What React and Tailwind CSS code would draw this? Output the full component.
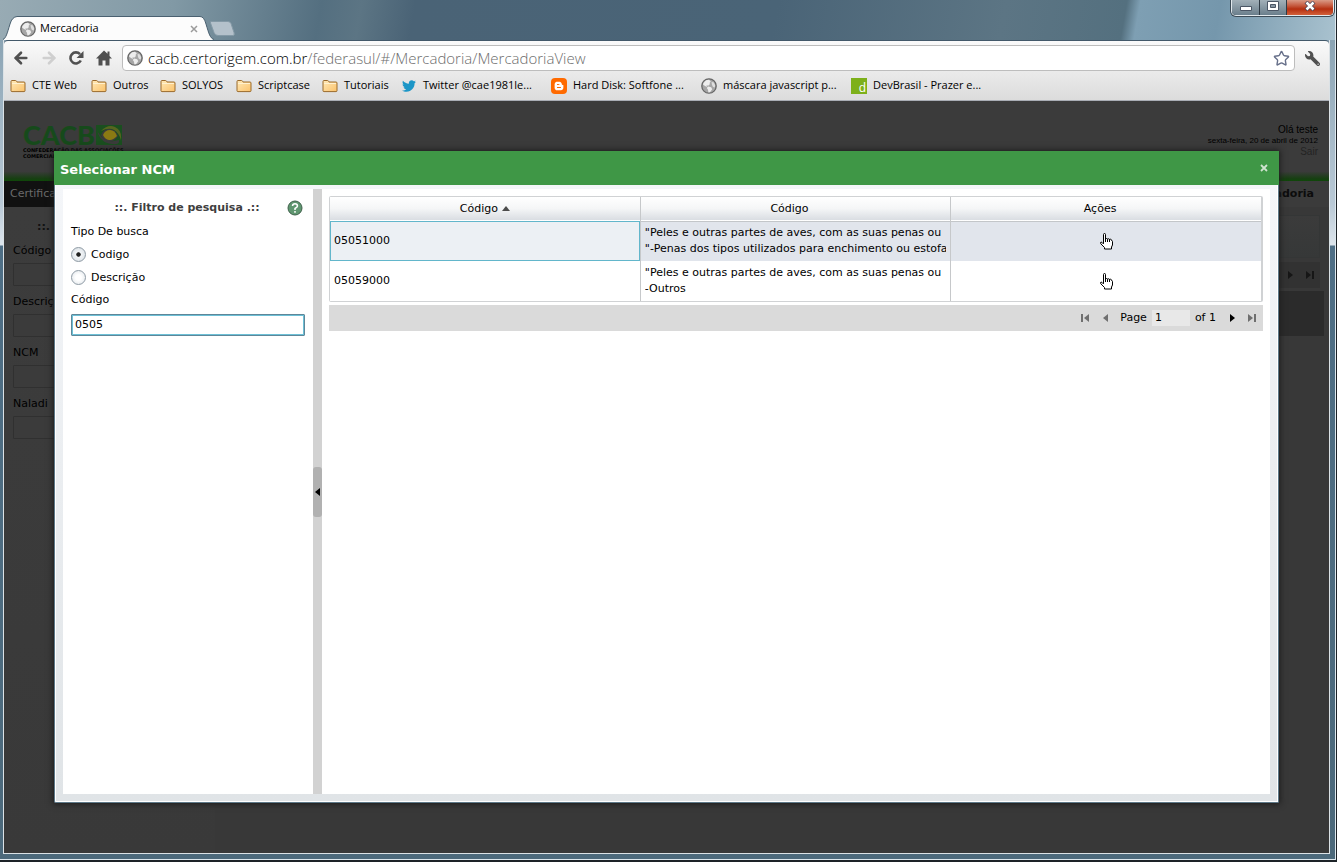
import { useState } from "react"
import { ArrowLeft, ArrowRight, Star } from "lucide-react"
import { FaTwitter, FaWrench, FaBloggerB } from "react-icons/fa"

const bookmarks = [
  { label: "CTE Web", icon: "folder", width: "w-[81px]" },
  { label: "Outros", icon: "folder", width: "w-[69px]" },
  { label: "SOLYOS", icon: "folder", width: "w-[76px]" },
  { label: "Scriptcase", icon: "folder", width: "w-[86px]" },
  { label: "Tutoriais", icon: "folder", width: "w-[79px]" },
  { label: "Twitter @cae1981le...", icon: "twitter", width: "w-[150px]" },
  { label: "Hard Disk: Softfone ...", icon: "blogger", width: "w-[150px]" },
  { label: "máscara javascript p...", icon: "globe", width: "w-[150px]" },
  { label: "DevBrasil - Prazer e...", icon: "dev", width: "w-[150px]" },
]

const rows = [
  {
    code: "05051000",
    lines: [
      '"Peles e outras partes de aves, com as suas penas ou',
      '"-Penas dos tipos utilizados para enchimento ou estofamento',
    ],
  },
  {
    code: "05059000",
    lines: ['"Peles e outras partes de aves, com as suas penas ou', "-Outros"],
  },
]

function Globe() {
  return (
    <svg viewBox="0 0 16 16" className="size-4 shrink-0">
      <circle cx="8" cy="8" r="7.2" fill="#a6a6a6" stroke="#666" strokeWidth="1.3" />
      <path d="M2.500 5 5 2.200 8 1.800l1.800 1.700L8.500 5 9 6 7.200 7.800 5.500 7.200 6 9 4 8 2 6.500ZM7 8.500l3.200.8 1 1.900-2.200 3-1.600.4-.4-2.800L5.800 10Z" fill="#ededed" />
      <path d="m10.500 4 2 .2 1.700 2.800-.4 2.600-1.800-.7-1-2Z" fill="#dedede" />
    </svg>
  )
}

function Folder() {
  return (
    <svg viewBox="0 0 16 16" className="size-4 shrink-0">
      <defs>
        <linearGradient id="folder" x1="0" y1="0" x2="1" y2="1">
          <stop offset="0" stopColor="#ffe9b8" />
          <stop offset="1" stopColor="#fbc26a" />
        </linearGradient>
      </defs>
      <path d="M1 12.800V3.500q0-1 1-1h3.500q.8 0 1.200 1l.3.500h7q1 0 1 1v7.800q0 .8-1 .8H2q-1 0-1-.8Z" fill="url(#folder)" stroke="#9a6a2c" />
      <path d="M2 5.500h12" stroke="#fff1cf" />
    </svg>
  )
}

function BookmarkIcon({ name }) {
  if (name === "twitter") {
    return (
      <span className="flex size-4 shrink-0 items-center justify-center">
        <FaTwitter className="size-[14px] text-[#1c96c7]" />
      </span>
    )
  }
  if (name === "globe") return <Globe />
  if (name === "blogger") {
    return (
      <span className="flex size-4 shrink-0 items-center justify-center rounded-sm bg-[#ff6a00]">
        <FaBloggerB className="size-[10px] text-white" />
      </span>
    )
  }
  if (name === "dev") {
    return (
      <span className="flex size-4 shrink-0 items-end justify-end bg-[#7db01a] pr-px text-xs leading-3 text-white">d</span>
    )
  }
  return <Folder />
}

function HandIcon() {
  return (
    <svg viewBox="0 0 13 17" className="h-[17px] w-[13px]">
      <path
        d="M3.500 10.500V1.500q0-1 1-1t1 1V6.500q0-1 1-1t1 1q0-.8 1-.8t1 1.200q0-.7 1-.7t1 1.300q1 0 1 1V12l-1 2v2h-7v-1.500L.8 10.800Q0 9.500 1 9q1 0 2.500 2Z"
        fill="white"
        stroke="black"
      />
      <path d="M5.500 6v3M7.500 6.500V9M9.500 7v2" stroke="black" fill="none" />
    </svg>
  )
}

function PagerArrow({ direction, end, className = "" }) {
  return (
    <svg viewBox="0 0 10 10" className={`size-[10px] ${direction === "left" ? "-scale-x-100" : ""} ${className}`}>
      <path d={end ? "M1 1l5 4-5 4ZM7 1h2v8H7Z" : "M3 1l5 4-5 4Z"} fill="currentColor" />
    </svg>
  )
}

function TitleBar() {
  return (
    <header className="flex h-10 shrink-0 items-end bg-[linear-gradient(100deg,#98abb4_0%,#8199a5_13%,#546f80_24%,#5c7584_27%,#4a6376_31%,#4a6477_58%,#5c7584_75%,#54707f_84%,#7e9fb3_85%,#7597ac_91%,#a9c2cf_100%)] pl-[3px]">
      <div className="flex h-6">
        <svg viewBox="0 0 14 24" className="h-6 w-[14px]">
          <path d="M0 24C3 22 4 18 7 8Q9 1 14 .5V24Z" fill="#fcfcfc" />
          <path d="M0 23.500C3 22 4 18 7 8Q9 1 14 .5" fill="none" stroke="#4a6070" />
        </svg>
        <div className="flex w-[183px] items-center gap-1 border-t border-[#4a6070] bg-[#fcfcfc] pl-[3px]">
          <Globe />
          <span className="flex-1">Mercadoria</span>
          <button aria-label="Fechar aba" className="pr-[2px]">
            <svg viewBox="0 0 8 8" className="size-2">
              <path d="m1 1 6 6M7 1 1 7" stroke="#9b9b9b" strokeWidth="1.500" />
            </svg>
          </button>
        </div>
        <svg viewBox="0 0 14 24" className="h-6 w-[14px]">
          <path d="M0 .5Q4 .5 6 8C9 18 10 22 14 24H0Z" fill="#fcfcfc" />
          <path d="M0 .5Q4 .5 6 8C9 18 10 22 14 23.500" fill="none" stroke="#4a6070" />
        </svg>
      </div>
      <button aria-label="Nova aba" className="-ml-1 mb-1">
        <svg viewBox="0 0 25 15" className="h-[15px] w-[25px]">
          <path d="M1 .5h17q2 0 3 2l3 9q1 3-1 3H8q-3 0-4-3L.5 2Q0 .5 1 .5Z" fill="#b4c1cb" stroke="#8499a6" />
        </svg>
      </button>
      <div className="mr-px ml-auto flex h-4 self-start rounded-b-[5px] border border-t-0 border-[#e2e9ed] bg-[#2f3b45] shadow-[0_0_0_1px_#3c4b56]">
        <button aria-label="Minimizar" className="flex w-[27px] items-center justify-center rounded-bl-sm bg-linear-to-b from-[#a2b0b8] to-[#6b7f8c]">
          <svg viewBox="0 0 12 6" className="h-[6px] w-3"><path d="M.5 1.500h11v4H.5Z" fill="white" stroke="#4b5665" /></svg>
        </button>
        <button aria-label="Maximizar" className="ml-px flex w-[26px] items-start justify-center rounded-none bg-linear-to-b from-[#a2b0b8] to-[#6b7f8c]">
          <svg viewBox="0 0 12 10" className="mt-px h-[10px] w-3">
            <path d="M.5.5h11v9H.5Z" fill="white" stroke="#4b5665" />
            <path d="M3.500 3.500h5v3h-5Z" fill="#8796a2" stroke="#4b5665" />
          </svg>
        </button>
        <button aria-label="Fechar" className="ml-px flex w-[46px] items-start justify-center rounded-br-sm bg-[linear-gradient(#d99a86,#c4563b_40%,#b52f10_60%,#d2603a)]">
          <svg viewBox="0 0 12 10" className="mt-px h-[10px] w-3">
            <path d="m2 1 8 8M10 1 2 9" stroke="#4b4455" strokeWidth="4" />
            <path d="m2.500 1.500 7 7M9.500 1.500l-7 7" stroke="white" strokeWidth="2.500" />
          </svg>
        </button>
      </div>
    </header>
  )
}

function Toolbar() {
  return (
    <nav className="shrink-0 rounded-t-sm border-t border-b border-t-[#43596a] border-b-[#a9adb5] bg-linear-to-b from-[#fafafa] to-[#dcdcdc]">
      <div className="flex items-center pt-1 pr-[9px] pl-2 text-[#505050]">
        <button aria-label="Voltar" className="flex w-7 shrink-0"><ArrowLeft className="size-[18px]" strokeWidth={3.5} /></button>
        <button aria-label="Avançar" className="flex w-7 shrink-0 text-[#cfcfcf]"><ArrowRight className="size-[18px]" strokeWidth={3.5} /></button>
        <button aria-label="Recarregar" className="flex w-7 shrink-0">
          <svg viewBox="0 0 16 16" className="size-4">
            <path d="M12.800 10.500A5.500 5.500 0 1 1 12 4.200" fill="none" stroke="currentColor" strokeWidth="2.600" />
            <path d="M15.500 1v7h-7Z" fill="currentColor" />
          </svg>
        </button>
        <button aria-label="Página inicial" className="flex w-[26px] shrink-0">
          <svg viewBox="0 0 16 16" className="size-4">
            <path d="M8 .5 0 8.500h2.500v7h4v-5h3v5h4v-7H16l-2.500-2.600V1.500h-2v2.300Z" fill="currentColor" />
          </svg>
        </button>
        <div className="flex h-[26px] flex-1 items-center gap-[5px] rounded-sm border border-[#bdbdbd] bg-white px-1">
          <Globe />
          <div className="flex-1 text-[15px] font-light text-[#6c6c6c]">
            <span className="text-black">cacb.certorigem.com.br</span>/federasul/#/Mercadoria/MercadoriaView
          </div>
          <button aria-label="Favoritar"><Star className="size-[17px] text-[#67708a]" /></button>
        </div>
        <button aria-label="Ferramentas" className="ml-[10px]"><FaWrench className="size-[15px] -scale-x-100" /></button>
      </div>
      <div className="flex h-[29px] items-center overflow-hidden pl-[6px]">
        {bookmarks.map((b) => (
          <a key={b.label} href="#" className={`flex shrink-0 items-center gap-[6px] whitespace-nowrap ${b.width}`}>
            <BookmarkIcon name={b.icon} />
            {b.label}
          </a>
        ))}
      </div>
    </nav>
  )
}

function BackgroundPage() {
  return (
    <div className="flex h-full flex-col font-['DejaVu_Sans',sans-serif] text-[11px] text-black">
      <div className="flex h-20 shrink-0 justify-between bg-[linear-gradient(#3b3b3b_88%,#173f12_97%,#0f4709)] pr-[11px] pl-[19px]">
        <div className="pt-[22px]">
          <div className="flex items-center gap-px">
            <span className="font-['Lato',sans-serif] text-[27px] leading-6 font-black text-[#164a1b]">CACB</span>
            <svg viewBox="0 0 26 20" className="h-5 w-[26px]">
              <path d="M0 0h26v20H0Z" fill="#1a4f1f" />
              <path d="M5 6Q12-1 19 2T25 15Q23 8 18 5T5 6Z" fill="#57651f" />
              <path d="M1 3Q2 16 13 18.500T23 15Q13 18 7 13T1 3Z" fill="#3b3b3b" />
              <path d="M5 10Q8 3 14 4t8 7q-4 6-9 5.500T5 10Z" fill="#3b3b3b" />
              <path d="M7 10Q9 5 14 5t7 6q-4 4.500-8 4T7 10Z" fill="#8a7a13" />
            </svg>
          </div>
          <div className="text-[5px] leading-[6px] font-bold whitespace-nowrap">
            <div>CONFEDERAÇÃO DAS ASSOCIAÇÕES</div>
            <div>COMERCIAIS</div>
          </div>
        </div>
        <div className="pt-[23px] text-right font-['Liberation_Sans',sans-serif] text-[10px] leading-[11px]">
          <div>Olá teste</div>
          <div className="text-[8px]">sexta-feira, 20 de abril de 2012</div>
          <a href="#" className="text-[#232323]">Sair</a>
        </div>
      </div>
      <div className="flex h-[26px] shrink-0 items-center justify-between">
        <span className="flex h-full w-[120px] items-center bg-[#111] pl-[6px] text-[#6a6a6a]">Certifica</span>
        <span className="pr-[15px] font-bold text-[#0c0c0c]">Mercadoria</span>
      </div>
      <div className="flex flex-1 bg-linear-to-b from-[#3c3c3c] to-[#393939]">
        <div className="w-[211px] px-[9px] pt-2 leading-6">
          <div className="pl-6 font-bold text-[#111]">::.</div>
          {["Código", "Descriç", "NCM", "Naladi"].map((label) => (
            <label key={label} className="block pb-1">
              {label}
              <input className="block h-[23px] w-full rounded-[1px] border border-[#303030] bg-[#3b3b3b]" />
            </label>
          ))}
        </div>
        <div className="flex-1 bg-[#383838] pt-2 pr-[5px] pl-2">
          <div className="mr-1 h-[43px] border border-[#343636] bg-linear-to-b from-[#3b3b3b] to-[#363838]" />
          <div className="mt-1 mr-1 flex h-[26px] items-center justify-end gap-[10px] bg-[#323232] pr-[5px] text-[#161616]">
            <PagerArrow direction="right" />
            <PagerArrow direction="right" end />
          </div>
          <div className="mt-[3px] h-[45px] bg-[#2b2b2b]" />
        </div>
      </div>
    </div>
  )
}

function FilterPanel() {
  const [searchType, setSearchType] = useState("Codigo")
  const [code, setCode] = useState("0505")

  return (
    <form className="w-[250px] shrink-0 px-2 pt-[7px]">
      <div className="grid h-6 grid-cols-[16px_1fr_16px] items-center pr-[2px]">
        <h2 className="col-start-2 text-center font-bold whitespace-nowrap text-[#3f3f3f]">::. Filtro de pesquisa .::</h2>
        <button type="button" aria-label="Ajuda">
          <svg viewBox="0 0 16 16" className="size-4">
            <circle cx="8" cy="8" r="7" fill="#5f9670" stroke="#3e5f4a" />
            <path d="M5.500 6q.2-2.200 2.500-2.200T10.500 6Q10.500 7.200 8 8.500V10M8 11v1.800" fill="none" stroke="white" strokeWidth="1.500" />
          </svg>
        </button>
      </div>
      <fieldset className="leading-[23px]">
        <legend>Tipo De busca</legend>
        {["Codigo", "Descrição"].map((option) => (
          <label key={option} className="flex h-[23px] items-center gap-[5px]">
            <input
              type="radio"
              name="tipo"
              checked={searchType === option}
              onChange={() => setSearchType(option)}
              className="size-[15px] appearance-none rounded-full border border-[#8e9aa4] bg-[radial-gradient(#fff_30%,#dde3e8)] checked:bg-[radial-gradient(#222_20%,#f2f5f7_28%,#d3dae0)]"
            />
            {option}
          </label>
        ))}
      </fieldset>
      <label className="block leading-[22px]">
        Código
        <input
          value={code}
          onChange={(e) => setCode(e.target.value)}
          className="mt-[3px] block h-[22px] w-full rounded-[1px] border border-[#5f8799] px-[3px] ring-1 ring-[#6dc0d6] ring-inset outline-none"
        />
      </label>
    </form>
  )
}

function ResultsGrid() {
  return (
    <section className="min-w-0 flex-1 p-[7px]">
      <div className="rounded-[2px] border border-r-2 border-[#d0d2d4]">
        <table className="w-full table-fixed border-collapse">
          <thead>
            <tr className="h-6 border-b border-[#c3c6c9] bg-[linear-gradient(#fff,#f5f6f7_50%,#d9dde2)]">
              <th className="border-r border-[#c6c8ca] font-normal">
                Código
                <svg viewBox="0 0 8 5" className="ml-1 inline h-[5px] w-2">
                  <path d="M0 5 4 0l4 5Z" fill="#4c4c4c" />
                </svg>
              </th>
              <th className="border-r border-[#c6c8ca] pr-3 pl-0 font-normal">Código</th>
              <th className="pr-3 font-normal">Ações</th>
            </tr>
          </thead>
          <tbody>
            {rows.map((row, i) => (
              <tr key={row.code} className={`h-10 ${i === 0 ? "bg-[#e1e5ec]" : "bg-white"}`}>
                <td className={`border-r border-[#c6c8ca] px-1 ${i === 0 ? "bg-[#ecf0f4] outline outline-offset-[-1px] outline-[#62b6cb]" : ""}`}>
                  {row.code}
                </td>
                <td className="border-r border-[#c6c8ca] px-1 leading-4">
                  {row.lines.map((line) => (
                    <div key={line} className="overflow-hidden whitespace-nowrap">{line}</div>
                  ))}
                </td>
                <td>
                  <button aria-label={`Selecionar ${row.code}`} className="mx-auto flex">
                    <HandIcon />
                  </button>
                </td>
              </tr>
            ))}
          </tbody>
        </table>
      </div>
      <div className="mt-[3px] flex h-[26px] items-center justify-end bg-[#dadada] pr-[6px]">
        <button aria-label="Primeira página" className="mr-[11px] text-[#6f6f6f]"><PagerArrow direction="left" end className="block" /></button>
        <button aria-label="Página anterior" className="mr-[9px] text-[#6f6f6f]"><PagerArrow direction="left" className="block" /></button>
        <label className="flex items-center gap-[5px]">
          Page
          <input defaultValue="1" className="h-4 w-[38px] bg-[#e8e8e8] px-[3px]" />
        </label>
        <span className="ml-[5px]">of 1</span>
        <button aria-label="Próxima página" className="ml-[11px]"><PagerArrow direction="right" className="block" /></button>
        <button aria-label="Última página" className="ml-[10px] text-[#6f6f6f]"><PagerArrow direction="right" end className="block" /></button>
      </div>
    </section>
  )
}

function NcmDialog() {
  return (
    <div role="dialog" aria-label="Selecionar NCM" className="absolute inset-[50px] flex flex-col font-['DejaVu_Sans',sans-serif] text-[11px] shadow-[0_0_6px_1px_#1c1c1c]">
      <div className="flex h-[34px] shrink-0 items-center justify-between bg-[#3f9746] pr-[11px] pl-[6px] text-white">
        <h1 className="pt-[3px] text-[13px] font-bold">Selecionar NCM</h1>
        <button aria-label="Fechar janela">
          <svg viewBox="0 0 8 8" className="size-2">
            <path d="m1 1 6 6M7 1 1 7" stroke="#cfe3cf" strokeWidth="1.800" />
          </svg>
        </button>
      </div>
      <div className="flex min-h-0 flex-1 flex-col rounded-b-[2px] border border-t-0 border-[#5d7888] bg-white px-px pb-px">
        <div className="flex min-h-0 flex-1 bg-linear-to-b from-[#f4f6f9] to-[#e0e4e7] px-[7px] pt-1 pb-[7px]">
          <div className="flex min-w-0 flex-1 bg-white">
            <FilterPanel />
            <div className="flex w-[9px] shrink-0 items-center bg-[#d2d2d2]">
              <button aria-label="Recolher painel" className="flex h-[50px] w-full items-center justify-center rounded-[3px] bg-[#b1b1b1]">
                <svg viewBox="0 0 5 8" className="h-2 w-[5px]">
                  <path d="M5 0v8L0 4Z" fill="black" />
                </svg>
              </button>
            </div>
            <ResultsGrid />
          </div>
        </div>
      </div>
    </div>
  )
}

export default function App() {
  return (
    <div className="flex h-screen flex-col border-r border-b-2 border-[#1d2328] bg-[#4f6d80] font-['Open_Sans','Noto_Sans',sans-serif] text-[11px] text-black">
      <div className="flex min-h-0 flex-1 flex-col border-r border-b border-[#dfe9ef]">
        <TitleBar />
        <div className="flex min-h-0 flex-1 bg-[linear-gradient(#8ba4b4,#b9c9d6_20%,#dde5ec_205px,#4f6f86_206px,#4c697b)] pr-[5px] pb-[5px] pl-[3px]">
          <div className="flex min-w-0 flex-1 flex-col border-r border-b border-l border-[#dbe2e6]">
            <Toolbar />
            <main className="relative min-h-0 flex-1 overflow-hidden bg-[#3b3b3b]">
              <BackgroundPage />
              <NcmDialog />
            </main>
          </div>
        </div>
      </div>
    </div>
  )
}
